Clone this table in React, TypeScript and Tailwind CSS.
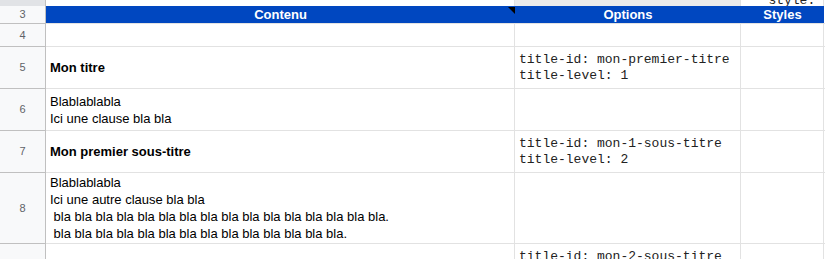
const font = "font-['Liberation_Sans',Arial,sans-serif]";
const mono = "font-['Liberation_Mono','Courier_New',monospace]";

type Row = {
  n: number;
  h: string;
  content: string[];
  bold?: boolean;
  options?: string[];
};

const rows: Row[] = [
  { n: 4, h: "h-[23px]", content: [] },
  { n: 5, h: "h-[42px]", content: ["Mon titre"], bold: true, options: ["title-id: mon-premier-titre", "title-level: 1"] },
  { n: 6, h: "h-[42px]", content: ["Blablablabla", "Ici une clause bla bla"] },
  { n: 7, h: "h-[42px]", content: ["Mon premier sous-titre"], bold: true, options: ["title-id: mon-1-sous-titre", "title-level: 2"] },
  {
    n: 8,
    h: "h-[71px]",
    content: [
      "Blablablabla",
      "Ici une autre clause bla bla",
      " bla bla bla bla bla bla bla bla bla bla bla bla bla bla bla bla.",
      " bla bla bla bla bla bla bla bla bla bla bla bla bla bla.",
    ],
  },
  { n: 9, h: "h-[60px]", content: [], options: ["title-id: mon-2-sous-titre", "title-level: 2"] },
];

const RowHeader = ({ n, h }: { n: number | string; h: string }) => (
  <div className={`${h} flex items-center justify-center bg-[#f8f9fa] border-r border-b border-[#c0c0c0] text-[11px] text-[#5f6368]`}>
    {n}
  </div>
);

export default function App() {
  return (
    <div className={`${font} w-[825px] h-[259px] overflow-hidden bg-white text-black`}>
      <div className="grid grid-cols-[46px_469px_226px_83px_1fr]">
        {/* partial row 2 */}
        <div className="h-[6px] bg-[#e1e3e6] border-r border-[#c0c0c0]" />
        <div className="h-[6px] border-r border-[#e2e2e2]" />
        <div className="h-[6px] bg-[#ebebeb] border-r border-[#e2e2e2]" />
        <div className="h-[6px] border-r border-[#e2e2e2] overflow-hidden flex items-end justify-end">
          <span className={`${mono} text-[13px] leading-[16px] -mb-[3px] text-[#222] whitespace-pre`}>style: </span>
        </div>
        <div className="h-[6px]" />

        {/* header row 3 */}
        <RowHeader n={3} h="h-[18px]" />
        <div className="relative h-[18px] bg-[#0047c0] border-b border-[#e2e2e2] flex items-center justify-center text-[13px] font-bold text-white">
          Contenu
          <svg className="absolute right-0 top-px" width="7" height="7" viewBox="0 0 7 7">
            <polygon points="0,0 7,0 7,7" fill="#000" />
          </svg>
        </div>
        <div className="h-[18px] bg-[#0047c0] border-b border-[#e2e2e2] flex items-center justify-center text-[13px] font-bold text-white">
          Options
        </div>
        <div className="h-[18px] bg-[#0047c0] border-b border-[#e2e2e2] flex items-center justify-center text-[13px] font-bold text-white">
          Styles
        </div>
        <div className="h-[18px] border-b border-[#e2e2e2]" />

        {rows.map((r) => (
          <>
            <RowHeader key={`h${r.n}`} n={r.n} h={r.h} />
            <div
              key={`c${r.n}`}
              className={`${r.h} flex flex-col justify-center px-[4px] border-r border-b border-[#e2e2e2] text-[13px] leading-[17px] whitespace-pre ${r.bold ? "font-bold" : ""}`}
            >
              {r.content.map((l, i) => (
                <div key={i}>{l}</div>
              ))}
            </div>
            <div
              key={`o${r.n}`}
              className={`${r.h} ${mono} flex flex-col ${r.n === 9 ? "justify-start pt-[5px]" : "justify-center"} pl-[4px] border-r border-b border-[#e2e2e2] text-[13px] leading-[16px] text-[#222] whitespace-pre`}
            >
              {(r.options ?? []).map((l, i) => (
                <div key={i}>{l}</div>
              ))}
            </div>
            <div key={`s${r.n}`} className={`${r.h} border-r border-b border-[#e2e2e2]`} />
            <div key={`e${r.n}`} className={`${r.h} border-b border-[#e2e2e2]`} />
          </>
        ))}
      </div>
    </div>
  );
}
